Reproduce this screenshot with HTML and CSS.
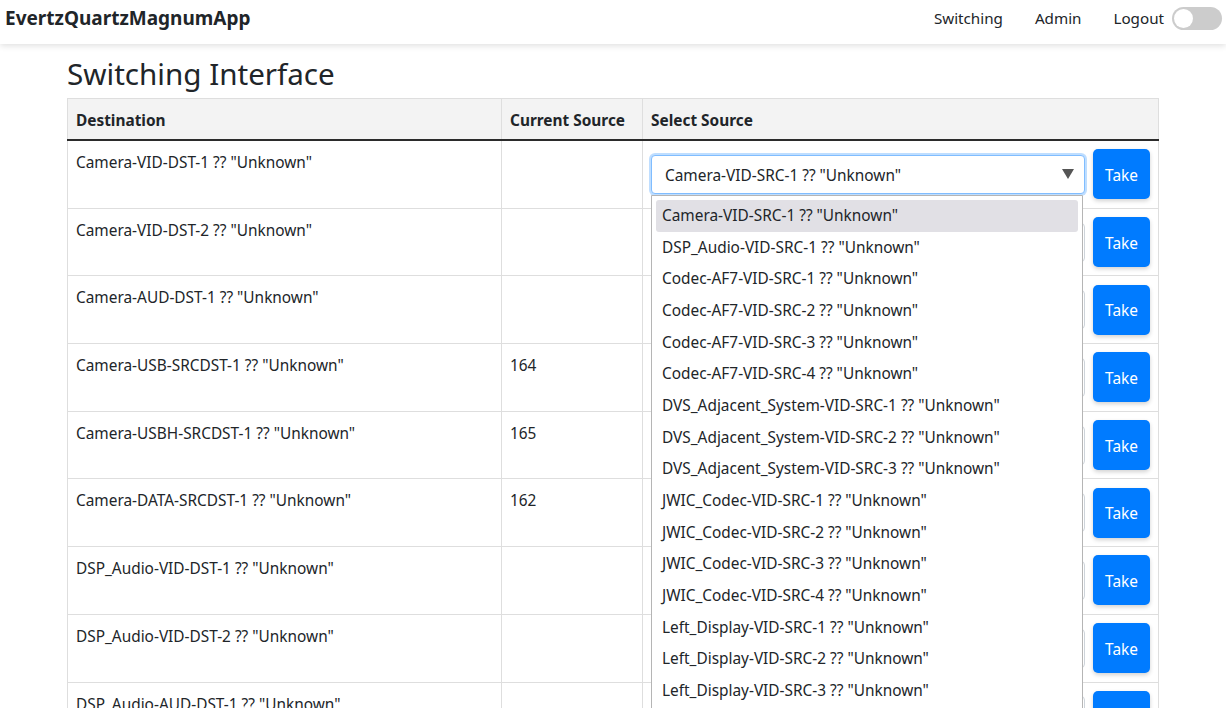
FILE: index.html
```html
<!DOCTYPE html>
<html lang="en">
<head>
<meta charset="utf-8">
<title>EvertzQuartzMagnumApp</title>
<link rel="stylesheet" href="styles.css">
</head>
<body>
<nav class="navbar">
  <a class="brand" href="#">EvertzQuartzMagnumApp</a>
  <div class="nav-links">
    <a href="#">Switching</a>
    <a href="#">Admin</a>
    <a href="#">Logout</a>
    <span class="toggle"><span class="knob"></span></span>
  </div>
</nav>
<main class="container">
  <h1 class="title">Switching Interface</h1>
  <table class="grid">
    <colgroup><col class="c-dest"><col class="c-cur"><col class="c-sel"></colgroup>
    <thead>
      <tr><th>Destination</th><th>Current Source</th><th>Select Source</th></tr>
    </thead>
    <tbody>
      <tr>
        <td>Camera-VID-DST-1 ?? "Unknown"</td><td></td>
        <td><div class="sel-wrap">
          <div class="select-box">
            <div class="select focused"><span>Camera-VID-SRC-1 ?? "Unknown"</span><span class="caret"></span></div>
            <ul class="dropdown">
              <li class="active">Camera-VID-SRC-1 ?? "Unknown"</li>
              <li>DSP_Audio-VID-SRC-1 ?? "Unknown"</li>
              <li>Codec-AF7-VID-SRC-1 ?? "Unknown"</li>
              <li>Codec-AF7-VID-SRC-2 ?? "Unknown"</li>
              <li>Codec-AF7-VID-SRC-3 ?? "Unknown"</li>
              <li>Codec-AF7-VID-SRC-4 ?? "Unknown"</li>
              <li>DVS_Adjacent_System-VID-SRC-1 ?? "Unknown"</li>
              <li>DVS_Adjacent_System-VID-SRC-2 ?? "Unknown"</li>
              <li>DVS_Adjacent_System-VID-SRC-3 ?? "Unknown"</li>
              <li>JWIC_Codec-VID-SRC-1 ?? "Unknown"</li>
              <li>JWIC_Codec-VID-SRC-2 ?? "Unknown"</li>
              <li>JWIC_Codec-VID-SRC-3 ?? "Unknown"</li>
              <li>JWIC_Codec-VID-SRC-4 ?? "Unknown"</li>
              <li>Left_Display-VID-SRC-1 ?? "Unknown"</li>
              <li>Left_Display-VID-SRC-2 ?? "Unknown"</li>
              <li>Left_Display-VID-SRC-3 ?? "Unknown"</li>
            </ul>
          </div>
          <button class="take">Take</button></div></td>
      </tr>
      <tr><td>Camera-VID-DST-2 ?? "Unknown"</td><td></td>
        <td><div class="sel-wrap"><div class="select-box"><div class="select"></div></div><button class="take">Take</button></div></td></tr>
      <tr><td>Camera-AUD-DST-1 ?? "Unknown"</td><td></td>
        <td><div class="sel-wrap"><div class="select-box"><div class="select"></div></div><button class="take">Take</button></div></td></tr>
      <tr><td>Camera-USB-SRCDST-1 ?? "Unknown"</td><td>164</td>
        <td><div class="sel-wrap"><div class="select-box"><div class="select"></div></div><button class="take">Take</button></div></td></tr>
      <tr><td>Camera-USBH-SRCDST-1 ?? "Unknown"</td><td>165</td>
        <td><div class="sel-wrap"><div class="select-box"><div class="select"></div></div><button class="take">Take</button></div></td></tr>
      <tr><td>Camera-DATA-SRCDST-1 ?? "Unknown"</td><td>162</td>
        <td><div class="sel-wrap"><div class="select-box"><div class="select"></div></div><button class="take">Take</button></div></td></tr>
      <tr><td>DSP_Audio-VID-DST-1 ?? "Unknown"</td><td></td>
        <td><div class="sel-wrap"><div class="select-box"><div class="select"></div></div><button class="take">Take</button></div></td></tr>
      <tr><td>DSP_Audio-VID-DST-2 ?? "Unknown"</td><td></td>
        <td><div class="sel-wrap"><div class="select-box"><div class="select"></div></div><button class="take">Take</button></div></td></tr>
      <tr><td>DSP_Audio-AUD-DST-1 ?? "Unknown"</td><td></td>
        <td><div class="sel-wrap"><div class="select-box"><div class="select"></div></div><button class="take">Take</button></div></td></tr>
    </tbody>
  </table>
</main>
</body>
</html>
```
FILE: styles.css
```css
html { overflow: hidden; }
body {
  margin: 0;
  font-family: "Noto Sans", "Open Sans", sans-serif;
  font-size: 15.4px;
  color: #212529;
  background: #fff;
}
a { color: inherit; text-decoration: none; }
.navbar {
  height: 44px;
  box-sizing: border-box;
  padding: 0 4px 8px 5px;
  display: flex;
  align-items: center;
  justify-content: space-between;
  box-shadow: 0 2px 6px rgba(0,0,0,0.12);
  position: relative;
  z-index: 2;
  background: #fff;
}
.brand { font-weight: 700; font-size: 19px; }
.nav-links { display: flex; align-items: center; gap: 32px; }
.nav-links a { font-size: 15.2px; }
.toggle {
  width: 50px; height: 23px;
  background: #ccc;
  border-radius: 12px;
  display: flex; align-items: center;
  padding: 0 2px;
  box-sizing: border-box;
  margin-left: -24px;
}
.knob { width: 19px; height: 19px; border-radius: 50%; background: #fff; }
.container { width: 1092px; margin: 0 auto; }
.title { font-size: 29.6px; font-weight: 400; line-height: 38px; margin: 11px 0 5px; }
.grid { width: 100%; border-collapse: collapse; }
.c-dest { width: 434px; }
.c-cur { width: 141px; }
.grid th {
  background: #f3f3f3;
  font-weight: 700;
  text-align: left;
  padding: 10px 8px 6px;
  border: 1px solid #dedede;
  border-bottom: 2px solid #2b2b2b;
  line-height: 24px;
}
.grid td {
  border: 1px solid #dedede;
  padding: 8px;
  vertical-align: top;
  line-height: 24px;
}
.grid td:first-child, .grid td:nth-child(2) { padding-top: 10px; }
.sel-wrap { display: flex; align-items: center; gap: 8px; height: 50.7px; }
.select-box { flex: 1; position: relative; }
.select {
  height: 39px;
  box-sizing: border-box;
  border: 1px solid #ced4da;
  border-radius: 4px;
  display: flex; align-items: center; justify-content: space-between;
  padding: 3px 10px 0 13px;
  background: #fff;
}
.select.focused { border-color: #80bdff; box-shadow: 0 0 0 2px rgba(0,123,255,0.25); }
.caret {
  width: 0; height: 0;
  border-left: 6px solid transparent;
  border-right: 6px solid transparent;
  border-top: 10px solid #555;
  margin-top: -3px;
}
.take {
  width: 57px; height: 50px;
  background: #007bff;
  color: #fff;
  border: 0;
  border-radius: 5px;
  font: inherit;
  box-shadow: 0 2px 4px rgba(0,0,0,0.18);
  padding: 3px 0 0;
}
.dropdown {
  position: absolute;
  left: 0; top: 40px;
  width: 432px;
  box-sizing: border-box;
  margin: 0;
  padding: 4px;
  list-style: none;
  background: #fff;
  border: 1px solid #b5b5b5;
  border-radius: 0 0 4px 4px;
  z-index: 5;
}
.dropdown li { height: 31.7px; line-height: 31.7px; padding: 0 6px; border-radius: 3px; }
.dropdown li.active { background: #e1e0e5; }
```
